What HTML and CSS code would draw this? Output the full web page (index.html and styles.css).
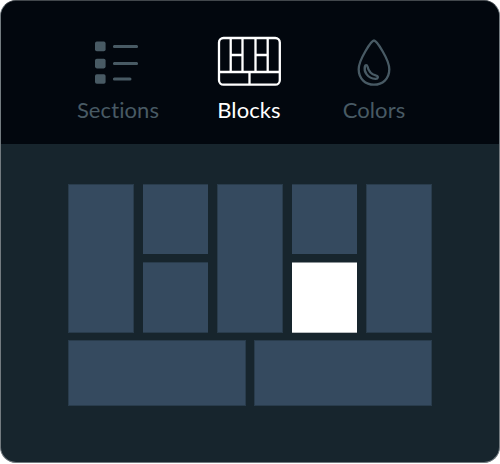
FILE: index.html
```html
<!DOCTYPE html>
<html lang="en">
<head>
<meta charset="utf-8">
<title>Blocks</title>
<link rel="stylesheet" href="styles.css">
</head>
<body>
<main class="panel">
  <nav class="tabs">
    <a class="tab sections">
      <svg class="icon" width="64" height="52" viewBox="0 0 64 52">
        <g fill="currentColor">
          <rect x="9" y="5.6" width="10.6" height="9.6" rx="1.8"/>
          <rect x="9" y="22.8" width="10.6" height="9.6" rx="1.8"/>
          <rect x="9" y="38.2" width="10.6" height="9.6" rx="1.8"/>
        </g>
        <path d="M28.4 10.4H50.6M28.4 27.5H50.6M28.4 43H44" fill="none" stroke="currentColor" stroke-width="3" stroke-linecap="round"/>
      </svg>
      <span class="label">Sections</span>
    </a>
    <a class="tab blocks active">
      <svg class="icon" width="64" height="52" viewBox="0 0 64 52">
        <g fill="none" stroke="currentColor" stroke-width="2.300">
          <rect x="2" y="2" width="60.800" height="46.700" rx="4.5"/>
          <path d="M2 36H63M13.700 2V36M25.500 2V36M38.500 2V36M50.700 2V36M13.700 19H25.500M38.500 19H50.700M32.500 36V49"/>
        </g>
      </svg>
      <span class="label">Blocks</span>
    </a>
    <a class="tab colors">
      <svg class="icon" width="64" height="52" viewBox="0 0 64 52">
        <g fill="none" stroke="currentColor" stroke-width="2.300" stroke-linejoin="round">
          <path d="M32 4.500C29.500 4.500 16.700 23.500 16.700 33.300C16.700 42.800 23.500 48.700 32 48.700S47.300 42.800 47.300 33.300C47.300 23.500 34.500 4.500 32 4.500Z"/>
          <path d="M22.900 30.300C21.500 35.500 25.500 42.600 33.500 42.900C36.200 43 36.800 40.200 34.300 39.700C29.500 38.500 26.500 35.500 25.500 30.500C25 28.800 23.300 28.900 22.900 30.300Z"/>
        </g>
      </svg>
      <span class="label">Colors</span>
    </a>
  </nav>
  <section class="canvas">
    <div class="columns">
      <div class="block wide"></div>
      <div class="stack"><div class="block top"></div><div class="block"></div></div>
      <div class="block wide"></div>
      <div class="stack"><div class="block top"></div><div class="block selected"></div></div>
      <div class="block wide"></div>
    </div>
    <div class="footer-row">
      <div class="block wide"></div>
      <div class="block wide"></div>
    </div>
  </section>
</main>
</body>
</html>
```

FILE: styles.css
```css
body {
  margin: 0;
  background: #fff;
  font-family: Lato, sans-serif;
}

.panel {
  box-sizing: border-box;
  width: 500px;
  height: 463px;
  border: 1px solid #737b80;
  border-top-color: #42474c;
  border-radius: 16px;
  overflow: hidden;
  background: #17252d;
}

.tabs {
  display: flex;
  box-sizing: border-box;
  height: 143px;
  padding: 35px 0 0 67px;
  background: #02070e;
}

.tab {
  display: flex;
  flex-direction: column;
  align-items: center;
  color: #485a64;
}

.sections { width: 100px; }
.blocks { width: 162px; }
.colors { width: 88px; }

.active { color: #fff; }

.icon { display: block; }

.label {
  margin-top: 8px;
  font-size: 22px;
  line-height: 28px;
  letter-spacing: 0.1px;
  font-variant-ligatures: none;
}

.canvas { padding: 40px 67px 0; }

.columns {
  display: grid;
  grid-template-columns: 66px 65px 66px 65px 66px;
  gap: 9px;
  height: 149px;
}

.stack {
  display: grid;
  grid-template-rows: 70px 71px;
  gap: 8px;
}

.footer-row {
  display: grid;
  grid-template-columns: 178px 178px;
  gap: 8px;
  height: 66px;
  margin-top: 7px;
}

.block {
  box-sizing: border-box;
  border: 0 solid #293c4c;
  border-width: 1px 0;
  background: #354a5f;
}

.wide { border-width: 1px; }
.top { border-bottom-width: 0; }

.selected {
  border-color: #8b9296 transparent #b9bdc0;
  background: #fff;
}
```
